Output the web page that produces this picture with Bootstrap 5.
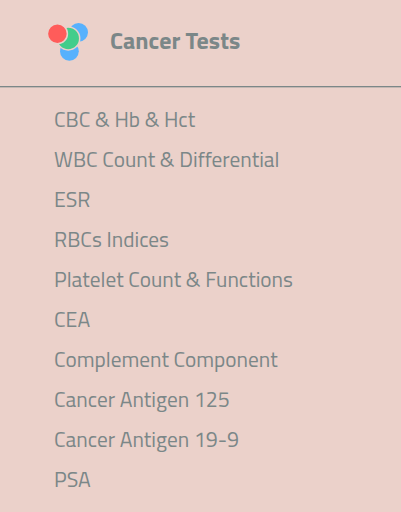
<!DOCTYPE html>
<html lang="en">
<head>
<meta charset="utf-8">
<meta name="viewport" content="width=device-width, initial-scale=1">
<title>Cancer Tests</title>
<link href="https://cdn.jsdelivr.net/npm/bootstrap@5.3.0/dist/css/bootstrap.min.css" rel="stylesheet">
<style>
body { background: #ebd1ca; color: #7b8788; font-family: "Titillium Web", Roboto, sans-serif; overflow: hidden; }
.panel-head { height: 87px; padding: 0 0 4px 48px; border-bottom: 1px solid #7b8788; box-shadow: 0 1px 0 rgba(123, 135, 136, .35); }
.panel-title { font-size: 24px; font-weight: 700; line-height: 30px; margin: -3px 0 0 21px; }
.tests { padding: 12px 0 0 54px; }
.tests li { height: 40px; line-height: 40px; font-size: 21.33px; white-space: nowrap; }
</style>
</head>
<body>
<header class="panel-head d-flex align-items-center">
  <svg width="41" height="40" viewBox="0 0 41 40" overflow="visible" aria-hidden="true">
    <circle cx="30.6" cy="11.3" r="9.4" fill="#57b1fd"/>
    <circle cx="21.4" cy="30.3" r="9.4" fill="#57b1fd"/>
    <circle cx="20.2" cy="17.4" r="11.5" fill="#42cd8b" stroke="#ebd1ca" stroke-width="1.5"/>
    <circle cx="9.4" cy="12.7" r="10" fill="#ff5c5a" stroke="#ebd1ca" stroke-width="1.5"/>
  </svg>
  <h1 class="panel-title">Cancer Tests</h1>
</header>
<ul class="tests list-unstyled mb-0">
  <li>CBC &amp; Hb &amp; Hct</li>
  <li>WBC Count &amp; Differential</li>
  <li>ESR</li>
  <li>RBCs Indices</li>
  <li>Platelet Count &amp; Functions</li>
  <li>CEA</li>
  <li>Complement Component</li>
  <li>Cancer Antigen 125</li>
  <li>Cancer Antigen 19-9</li>
  <li>PSA</li>
</ul>
<script src="https://cdn.jsdelivr.net/npm/bootstrap@5.3.0/dist/js/bootstrap.bundle.min.js"></script>
</body>
</html>
